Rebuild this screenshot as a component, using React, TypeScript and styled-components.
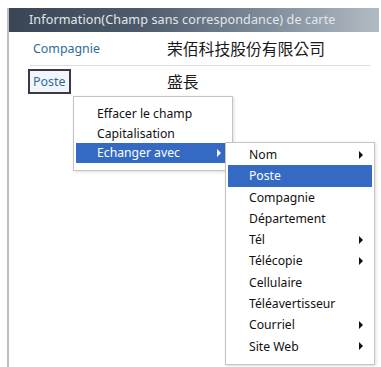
import React from 'react';
import styled, { createGlobalStyle } from 'styled-components';

const GlobalStyle = createGlobalStyle`
  html, body {
    margin: 0;
    padding: 0;
    background: #ffffff;
  }
  body {
    font-family: "Noto Sans", "Noto Sans CJK TC", sans-serif;
    font-size: 12px;
    color: #111;
  }
`;

const Page = styled.div`
  width: 381px;
  height: 367px;
  padding: 8px 2px 0 7px;
  box-sizing: border-box;
  overflow: hidden;
`;

const Window = styled.div`
  position: relative;
  height: 359px;
  border-left: 2px solid #bdbdbd;
  background: #fff;
`;

const TitleBar = styled.div`
  height: 24px;
  line-height: 24px;
  padding-left: 20px;
  background: linear-gradient(to right, #3a4656 0%, #4d5a6a 35%, #7f8c9a 70%, #b1bbc3 100%);
  color: #e2e7ec;
  font-size: 12.6px;
  white-space: nowrap;
  letter-spacing: 0.1px;
`;

const FieldList = styled.div`
  display: flex;
  flex-direction: column;
  padding: 0 9px 0 21px;
`;

const FieldRow = styled.div<{ $divider?: boolean }>`
  display: flex;
  align-items: center;
  height: ${(p) => (p.$divider ? '33px' : '30px')};
  border-bottom: ${(p) => (p.$divider ? '1px solid #dcdcdc' : 'none')};
`;

const FieldLabel = styled.div<{ $focused?: boolean }>`
  width: 137px;
  flex: none;
  color: #2d6d98;
  font-size: 12.4px;
  span {
    display: inline-block;
    padding: ${(p) => (p.$focused ? '2px 4px 2px 3px' : '2px 3px')};
    margin-left: ${(p) => (p.$focused ? '-2px' : '0')};
    border: ${(p) => (p.$focused ? '2px solid #3a3a44' : 'none')};
    background: ${(p) => (p.$focused ? '#f2f6fa' : 'transparent')};
  }
`;

const FieldValue = styled.div`
  font-family: "Noto Sans CJK TC", sans-serif;
  font-size: 15.8px;
  color: #1a1a1a;
`;

const Menu = styled.div<{ $padTop: number; $padBottom: number }>`
  display: flex;
  flex-direction: column;
  background: #fff;
  border: 1px solid #c4c4c4;
  box-shadow: 1px 1px 3px rgba(0, 0, 0, 0.14);
  padding: ${(p) => `${p.$padTop}px 2px ${p.$padBottom}px 2px`};
  box-sizing: border-box;
`;

const ContextMenu = styled(Menu)`
  position: absolute;
  left: 64px;
  top: 88px;
  width: 160px;
`;

const SubMenu = styled(Menu)`
  position: absolute;
  left: calc(100% - 5px);
  top: -1px;
  width: 150px;
  z-index: 2;
`;

const MenuItem = styled.div<{ $active?: boolean; $h: number }>`
  position: relative;
  height: ${(p) => p.$h}px;
  line-height: ${(p) => p.$h}px;
  padding-left: 21px;
  background: ${(p) => (p.$active ? '#346ac3' : 'transparent')};
  color: ${(p) => (p.$active ? '#ffffff' : '#111111')};
  font-size: 12.2px;
  white-space: nowrap;
`;

const Arrow = styled.span<{ $light?: boolean }>`
  position: absolute;
  right: 9px;
  top: 50%;
  margin-top: -4px;
  width: 0;
  height: 0;
  border-top: 4px solid transparent;
  border-bottom: 4px solid transparent;
  border-left: 4px solid ${(p) => (p.$light ? '#ffffff' : '#111111')};
`;

const swapItems = [
  { label: 'Nom', sub: true },
  { label: 'Poste', active: true },
  { label: 'Compagnie' },
  { label: 'Département' },
  { label: 'Tél', sub: true },
  { label: 'Télécopie', sub: true },
  { label: 'Cellulaire' },
  { label: 'Téléavertisseur' },
  { label: 'Courriel', sub: true },
  { label: 'Site Web', sub: true },
];

const App: React.FC = () => {
  return (
    <Page>
      <GlobalStyle />
      <Window>
        <TitleBar>Information(Champ sans correspondance) de carte</TitleBar>
        <FieldList>
          <FieldRow $divider>
            <FieldLabel>
              <span>Compagnie</span>
            </FieldLabel>
            <FieldValue>荣佰科技股份有限公司</FieldValue>
          </FieldRow>
          <FieldRow>
            <FieldLabel $focused>
              <span>Poste</span>
            </FieldLabel>
            <FieldValue>盛長</FieldValue>
          </FieldRow>
        </FieldList>

        <ContextMenu $padTop={7} $padBottom={7}>
          <MenuItem $h={19.5}>Effacer le champ</MenuItem>
          <MenuItem $h={19.5}>Capitalisation</MenuItem>
          <MenuItem $h={19.5} $active>
            Echanger avec
            <Arrow $light />
            <SubMenu $padTop={1} $padBottom={7}>
              {swapItems.map((it) => (
                <MenuItem key={it.label} $h={21.3} $active={it.active}>
                  {it.label}
                  {it.sub && <Arrow />}
                </MenuItem>
              ))}
            </SubMenu>
          </MenuItem>
        </ContextMenu>
      </Window>
    </Page>
  );
};

export default App;
